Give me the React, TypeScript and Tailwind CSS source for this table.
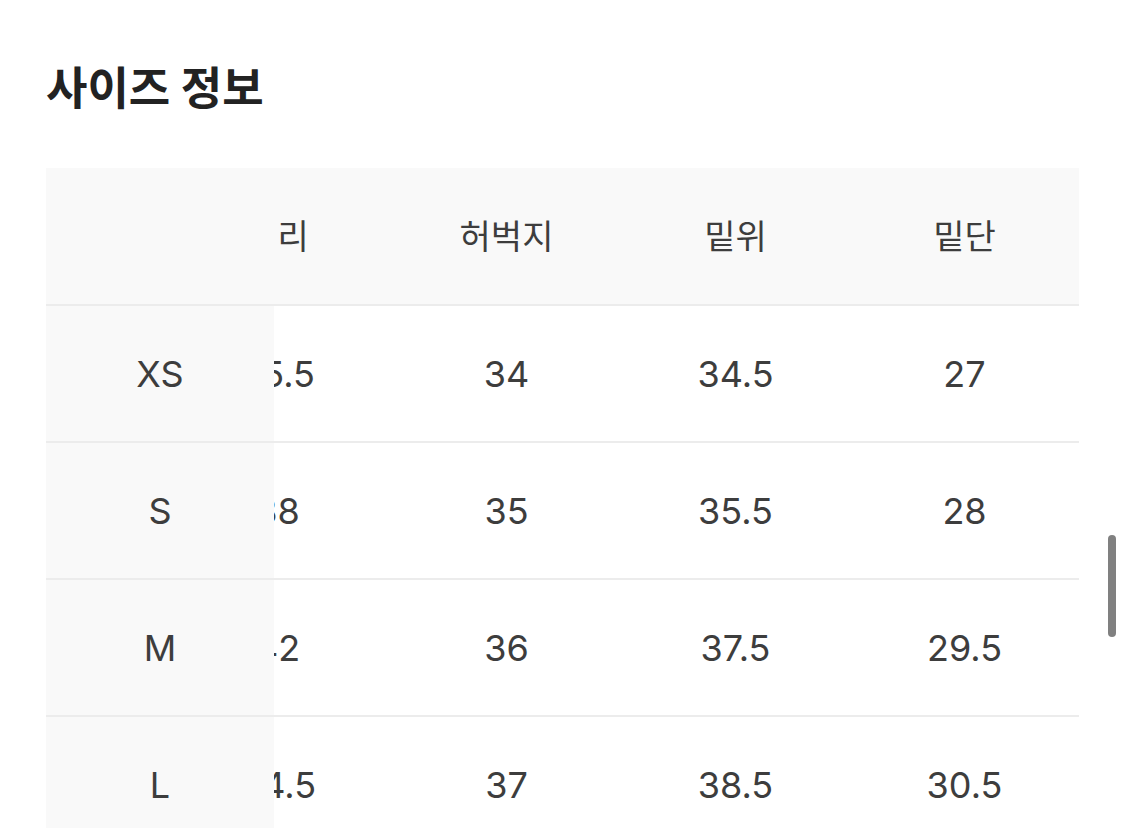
import React, { useEffect, useRef } from "react";

const columns = ["허리", "허벅지", "밑위", "밑단"];

const rows = [
  { size: "XS", values: ["35.5", "34", "34.5", "27"] },
  { size: "S", values: ["38", "35", "35.5", "28"] },
  { size: "M", values: ["42", "36", "37.5", "29.5"] },
  { size: "L", values: ["44.5", "37", "38.5", "30.5"] },
];

const App = () => {
  const scrollRef = useRef<HTMLDivElement>(null);

  // table is shown scrolled all the way to the right
  useEffect(() => {
    const el = scrollRef.current;
    if (el) el.scrollLeft = el.scrollWidth;
  }, []);

  return (
    <div className="relative h-[828px] overflow-hidden bg-white font-['Inter','Noto_Sans_CJK_KR',sans-serif] text-[#3d3d3d]">
      <div className="px-[46px] pt-[58px]">
        <h2 className="text-[45px] font-bold leading-[62px] text-[#222222]">
          사이즈 정보
        </h2>

        {/* size table, first column sticks */}
        <div
          ref={scrollRef}
          className="mt-[48px] w-[1033px] overflow-x-auto [scrollbar-width:none]"
        >
          <table className="table-fixed border-collapse w-[1144px]">
            <thead>
              <tr className="h-[137px] bg-[#f9f9f9] border-b-2 border-[#ececec]">
                <th className="sticky left-0 w-[228px] bg-[#f9f9f9] p-0"></th>
                {columns.map((col) => (
                  <th
                    key={col}
                    className="w-[229px] p-0 text-center text-[34px] font-normal"
                  >
                    {col}
                  </th>
                ))}
              </tr>
            </thead>
            <tbody>
              {rows.map((row) => (
                <tr key={row.size} className="h-[137px] border-b-2 border-[#ececec]">
                  <td className="sticky left-0 w-[228px] bg-[#f9f9f9] p-0 text-center text-[36px]">
                    {row.size}
                  </td>
                  {row.values.map((v, i) => (
                    <td key={i} className="p-0 text-center text-[36px]">
                      {v}
                    </td>
                  ))}
                </tr>
              ))}
            </tbody>
          </table>
        </div>
      </div>

      {/* page scroll indicator */}
      <div className="absolute left-[1108px] top-[535px] h-[102px] w-[8px] rounded-full bg-[#808080]"></div>
    </div>
  );
};

export default App;
